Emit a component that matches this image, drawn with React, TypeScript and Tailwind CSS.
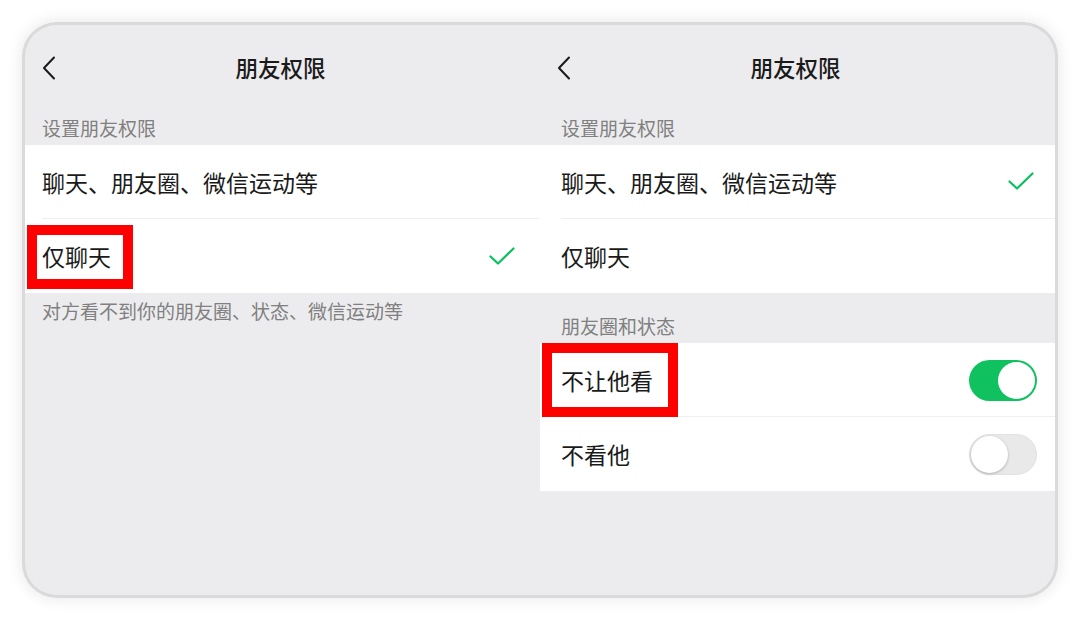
import React from 'react'

const FONT = { fontFamily: '"Noto Sans CJK SC", "Noto Sans", sans-serif' }

function Back() {
  return (
    <svg width="14" height="24" viewBox="0 0 14 24" fill="none" className="text-[#1a1a1a]">
      <path d="M12 1.5 L2 12 L12 22.5" stroke="currentColor" strokeWidth="2" strokeLinecap="round" strokeLinejoin="round" />
    </svg>
  )
}

function Check() {
  return (
    <svg width="26" height="20" viewBox="0 0 26 20" fill="none">
      <path d="M1.5 9.5 L9 16.5 L24.5 1.5" stroke="#07c160" strokeWidth="2.2" strokeLinecap="round" strokeLinejoin="round" />
    </svg>
  )
}

function Toggle({ on }: { on: boolean }) {
  return on ? (
    <div className="w-[68px] h-[41px] rounded-full bg-[#10c160] flex items-center justify-end px-[2px]">
      <div className="w-[37px] h-[37px] rounded-full bg-white" />
    </div>
  ) : (
    <div className="w-[68px] h-[41px] rounded-full bg-[#e9e9e9] border border-[#e2e2e2] flex items-center justify-start px-[1px]">
      <div className="w-[37px] h-[37px] rounded-full bg-white shadow-[0_1px_3px_rgba(0,0,0,0.25)]" />
    </div>
  )
}

function Header() {
  return (
    <div className="h-[86px] relative flex items-center justify-center">
      <div className="absolute left-[17px] top-[31px]"><Back /></div>
      <div className="text-[22.5px] font-medium text-[#1a1a1a] -translate-x-[2px]">朋友权限</div>
    </div>
  )
}

export default function App() {
  return (
    <div className="w-[1080px] h-[620px] bg-white pt-[25px] pl-[25px]" style={FONT}>
      <div className="w-[1030px] h-[570px] rounded-[32px] bg-[#ececee] overflow-hidden flex shadow-[0_0_0_3px_#dadada,0_0_14px_6px_rgba(0,0,0,0.07)]">
        {/* left panel */}
        <div className="w-[515px] flex flex-col">
          <Header />
          <div className="h-[34px] flex items-center pl-[17px] text-[19px] text-[#808080]">设置朋友权限</div>
          <div className="bg-white">
            <div className="relative h-[74px] flex items-center pl-[17px]">
              <span className="text-[23px] text-[#1a1a1a] leading-none">聊天、朋友圈、微信运动等</span>
              <div className="absolute bottom-0 left-[17px] right-[1px] h-px bg-[#efefef]" />
            </div>
            <div className="relative h-[74px] flex items-center pl-[17px] pr-[25px]">
              <span className="text-[23px] text-[#1a1a1a] leading-none">仅聊天</span>
              <div className="ml-auto pt-[2px]"><Check /></div>
              <div className="absolute left-[2px] top-[6px] w-[106px] h-[64px] border-[10px] border-[#ff0000]" />
            </div>
          </div>
          <div className="h-[36px] flex items-center pl-[17px] text-[19px] text-[#808080]">对方看不到你的朋友圈、状态、微信运动等</div>
        </div>

        {/* right panel */}
        <div className="w-[515px] flex flex-col">
          <Header />
          <div className="h-[34px] flex items-center pl-[21px] text-[19px] text-[#808080]">设置朋友权限</div>
          <div className="bg-white">
            <div className="relative h-[74px] flex items-center pl-[21px] pr-[21px]">
              <span className="text-[23px] text-[#1a1a1a] leading-none">聊天、朋友圈、微信运动等</span>
              <div className="ml-auto"><Check /></div>
              <div className="absolute bottom-0 left-[21px] right-0 h-px bg-[#efefef]" />
            </div>
            <div className="h-[74px] flex items-center pl-[21px]">
              <span className="text-[23px] text-[#1a1a1a] leading-none">仅聊天</span>
            </div>
          </div>
          <div className="h-[50px] flex items-center pt-[16px] pl-[21px] text-[19px] text-[#808080]">朋友圈和状态</div>
          <div className="bg-white">
            <div className="relative h-[74px] flex items-center pl-[21px] pr-[18px]">
              <span className="text-[23px] text-[#1a1a1a] leading-none">不让他看</span>
              <div className="ml-auto"><Toggle on /></div>
              <div className="absolute bottom-0 left-[21px] right-0 h-px bg-[#efefef]" />
              <div className="absolute left-[2px] top-0 w-[136px] h-[74px] border-[10px] border-[#ff0000]" />
            </div>
            <div className="h-[74px] flex items-center pl-[21px] pr-[18px]">
              <span className="text-[23px] text-[#1a1a1a] leading-none">不看他</span>
              <div className="ml-auto"><Toggle on={false} /></div>
            </div>
          </div>
        </div>
      </div>
    </div>
  )
}
